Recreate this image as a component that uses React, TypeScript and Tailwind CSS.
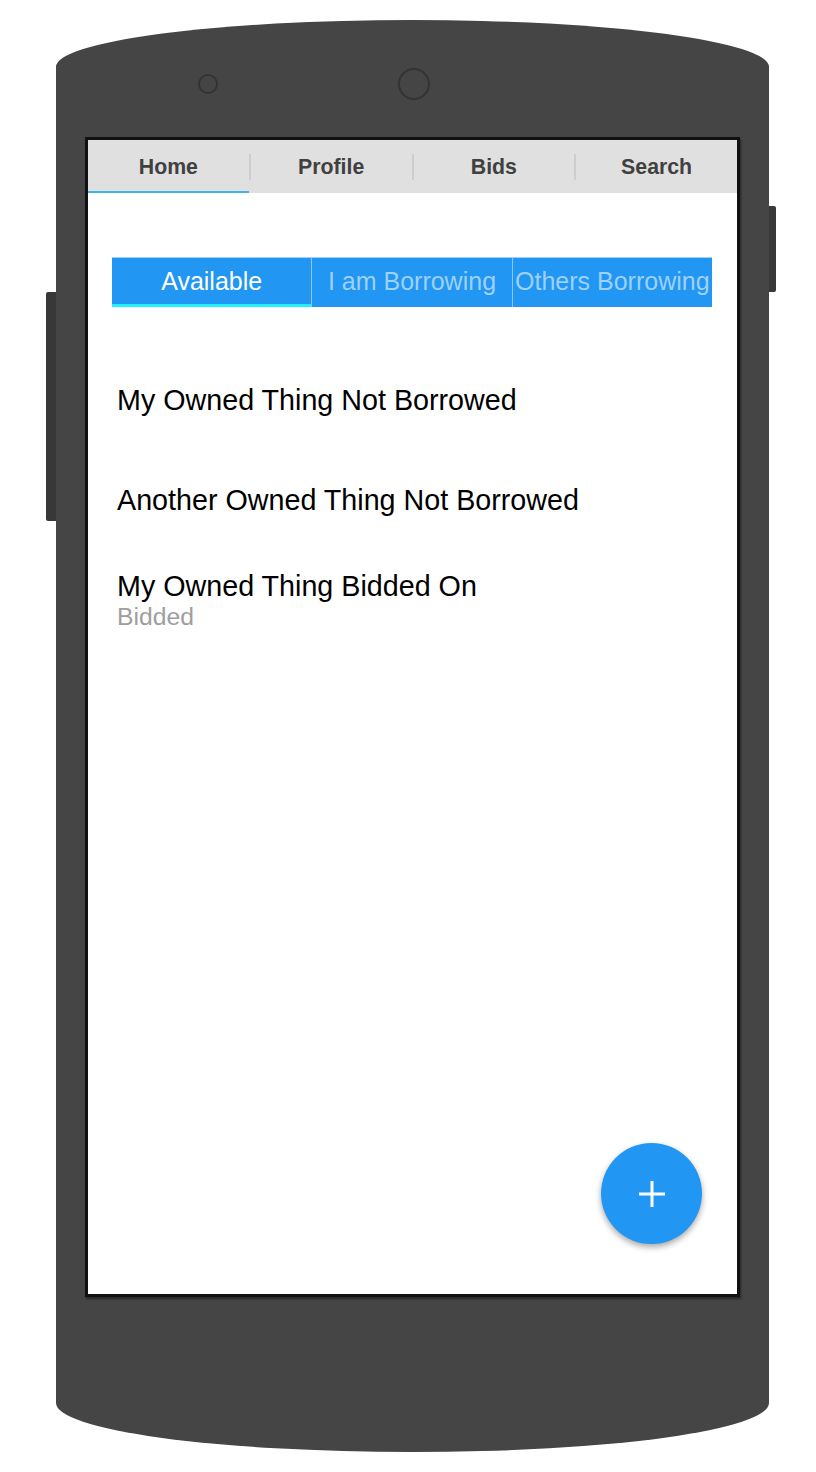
import React from 'react';

const tabs = ['Home', 'Profile', 'Bids', 'Search'];
const segments = ['Available', 'I am Borrowing', 'Others Borrowing'];

const TopTabs = () => (
  <div className="flex h-[53px] items-center bg-[#e0e0e0]">
    {tabs.map((t, i) => (
      <React.Fragment key={t}>
        {i > 0 && <div className="h-[26px] w-[2px] bg-[#cdcdcd]" />}
        <div
          className={
            'flex h-full flex-1 items-center justify-center pt-[3px] text-[21.3px] font-bold text-[#404040] ' +
            (i === 0 ? 'shadow-[inset_0_-2px_0_#3db5e6]' : '')
          }
        >
          {t}
        </div>
      </React.Fragment>
    ))}
  </div>
);

const Segmented = () => (
  <div className="ml-[24px] mt-[64px] flex h-[50px] w-[600px] bg-[#2196f3] shadow-[inset_0_1px_0_#9dd0fa]">
    {segments.map((s, i) => (
      <div
        key={s}
        className={
          'flex flex-1 items-center justify-center whitespace-nowrap text-[25px] ' +
          (i > 0 ? 'border-l border-[#8cc7f8] text-[#9ed1fb] ' : 'text-white shadow-[inset_0_-3px_0_#1ef2ff]')
        }
      >
        {s}
      </div>
    ))}
  </div>
);

const Item = ({ title, sub }: { title: string; sub?: string }) => (
  <div className="flex h-[100px] flex-col justify-center pl-[29px]">
    <div className="text-[28.7px] leading-[33px] text-black">{title}</div>
    {sub && <div className="text-[24.7px] leading-[28px] text-[#9e9e9e]">{sub}</div>}
  </div>
);

export default function App() {
  return (
    <div
      className="h-[1472px] w-[816px] bg-white pl-[56px] pt-[20px]"
      style={{ fontFamily: '"Liberation Sans", Arial, sans-serif' }}
    >
      {/* phone body */}
      <div className="relative flex h-[1432px] w-[713px] flex-col items-center rounded-tl-[356px_47px] rounded-tr-[356px_47px] rounded-bl-[356px_49px] rounded-br-[356px_49px] bg-[#454545]">
        <div className="absolute left-[-10px] top-[272px] h-[229px] w-[10px] rounded-l-[2px] bg-[#383838]" />
        <div className="absolute right-[-7px] top-[186px] h-[86px] w-[7px] rounded-r-[2px] bg-[#383838]" />

        {/* speaker + camera */}
        <div className="flex h-[117px] w-full items-start pt-[48px]">
          <div className="flex h-[32px] items-center">
            <div className="ml-[142px] h-[20px] w-[20px] rounded-full border-2 border-[#333]" />
            <div className="ml-[180px] h-[32px] w-[32px] rounded-full border-2 border-[#333]" />
          </div>
        </div>

        {/* screen */}
        <div className="relative h-[1160px] w-[655px] overflow-hidden border-[3px] border-[#111] bg-white shadow-[1px_2px_2px_rgba(0,0,0,0.45)]">
          <TopTabs />
          <Segmented />
          <div className="mt-[43px]">
            <Item title="My Owned Thing Not Borrowed" />
            <Item title="Another Owned Thing Not Borrowed" />
            <Item title="My Owned Thing Bidded On" sub="Bidded" />
          </div>

          <button className="absolute bottom-[50px] right-[35px] flex h-[101px] w-[101px] items-center justify-center rounded-full bg-[#2196f3] shadow-[0_3px_6px_rgba(0,0,0,0.35)]">
            <svg width="28" height="28" viewBox="0 0 28 28">
              <path d="M14 1v26M1 14h26" stroke="white" strokeWidth="3" />
            </svg>
          </button>
        </div>
      </div>
    </div>
  );
}
